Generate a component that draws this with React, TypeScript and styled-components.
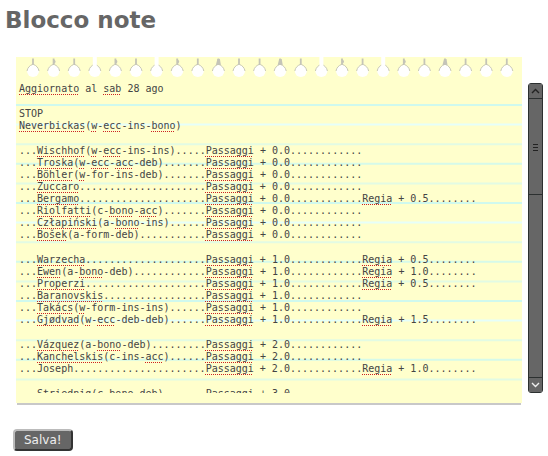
import React, { useRef, useState } from 'react';
import styled, { createGlobalStyle, css } from 'styled-components';

const GlobalStyle = createGlobalStyle`
  * { box-sizing: border-box; }
  body { margin: 0; background: #fff; }
`;

const Page = styled.main`
  padding: 7px 5px 0;
  font-family: 'DejaVu Sans', sans-serif;
`;

const Title = styled.h1`
  margin: 0;
  color: #666;
  font-size: 23px;
  line-height: 27px;
`;

const NoteForm = styled.form`
  margin-top: 23px;
`;

const Pad = styled.div`
  display: flex;
  gap: 6px;
  padding-left: 11px;
`;

const Sheet = styled.div`
  flex: 1;
  min-width: 0;
`;

const Paper = styled.div`
  position: relative;
  padding: 26px 0 10px;
  background: #ffc;
`;

const PaperArt = styled.svg`
  position: absolute;
  inset: 0;
  width: 100%;
  height: 100%;
`;

const PaperEdge = styled.div`
  height: 2px;
  margin: 0 1px;
  background: #c8c8c8;
`;

const Editor = styled.div`
  position: relative;
  height: 310px;
`;

const noteText = css`
  width: 100%;
  height: 100%;
  margin: 0;
  padding: 0 3px;
  border: 0;
  overflow: hidden;
  background: transparent;
  font: 10px/12px 'DejaVu Sans Mono', monospace;
  white-space: pre;
`;

const NoteView = styled.div`
  ${noteText}
  position: relative;
  color: #444;
`;

const NoteRow = styled.div`
  height: 12px;

  &:empty {
    height: 13px;
  }
`;

const Misspelled = styled.span`
  text-decoration: underline dotted #c22 1px;
  text-decoration-skip-ink: none;
  text-underline-offset: 2px;
`;

const NoteArea = styled.textarea`
  ${noteText}
  position: absolute;
  inset: 0;
  display: block;
  color: transparent;
  caret-color: #444;
  resize: none;
  outline: none;
`;

const ScrollBar = styled.div`
  display: flex;
  flex-direction: column;
  flex: none;
  width: 15px;
  margin: 26px 0 12px;
  border: 1px solid #2c3030;
  border-radius: 3px;
  background: #666;
`;

const ScrollButton = styled.button`
  display: flex;
  align-items: center;
  justify-content: center;
  height: 14px;
  padding: 0;
  border: 0;
  background: #666;
`;

const Thumb = styled.div`
  display: flex;
  align-items: center;
  justify-content: center;
  height: 97px;
  border: solid #2c3030;
  border-width: 1px 0;
`;

const Track = styled.div`
  flex: 1;
  border-bottom: 1px solid #2c3030;
`;

const SaveButton = styled.button`
  display: block;
  height: 22px;
  margin: 24px 0 0 8px;
  padding: 0 9px;
  border: 2px solid;
  border-color: #bbb #333 #333 #bbb;
  border-radius: 4px;
  background: #666;
  color: #eee;
  font: 12px/17px 'DejaVu Sans', sans-serif;
`;

const entry = (name: string, steps: string, direction?: string) =>
  `...${name}`.padEnd(31, '.') +
  `Passaggi + ${steps}............` +
  (direction ? `Regia + ${direction}........` : '');

const initialNote = [
  'Aggiornato al sab 28 ago',
  '',
  'STOP',
  'Neverbickas(w-ecc-ins-bono)',
  '',
  entry('Wischhof(w-ecc-ins-ins)', '0.0'),
  entry('Troska(w-ecc-acc-deb)', '0.0'),
  entry('Böhler(w-for-ins-deb)', '0.0'),
  entry('Zuccaro', '0.0'),
  entry('Bergamo', '0.0', '0.5'),
  entry('Riolfatti(c-bono-acc)', '0.0'),
  entry('Człapiński(a-bono-ins)', '0.0'),
  entry('Bošek(a-form-deb)', '0.0'),
  '',
  entry('Warzecha', '1.0', '0.5'),
  entry('Ewen(a-bono-deb)', '1.0', '1.0'),
  entry('Properzi', '1.0', '0.5'),
  entry('Baranovskis', '1.0'),
  entry('Takács(w-form-ins-ins)', '1.0'),
  entry('Gjødvad(w-ecc-deb-deb)', '1.0', '1.5'),
  '',
  entry('Vázquez(a-bono-deb)', '2.0'),
  entry('Kanchelskis(c-ins-acc)', '2.0'),
  entry('Joseph', '2.0', '1.0'),
  '',
  entry('Striednig(c-bono-deb)', '3.0'),
].join('\n');

const knownWords = new Set(['al', 'ago', 'STOP', 'ins', 'for', 'form', 'deb', 'a', 'c', 'Joseph']);

const markSpelling = (line: string) =>
  line
    .split(/(\p{L}+)/u)
    .map((part, i) =>
      i % 2 === 1 && !knownWords.has(part) ? <Misspelled key={i}>{part}</Misspelled> : part,
    )
    .filter((part) => part !== '');

type Stem = 'thin' | 'wide' | 'torn' | 'open';
const stems: Stem[] = [
  'thin', 'torn', 'thin', 'open', 'torn', 'thin', 'open', 'torn', 'thin', 'wide', 'thin', 'thin',
  'wide', 'thin', 'open', 'torn', 'thin', 'open', 'torn', 'thin', 'wide', 'thin', 'thin', 'thin',
];

const Hole = ({ x, stem }: { x: number; stem: Stem }) => (
  <g transform={`translate(${x} 0)`}>
    <circle cy="14" r="6" fill="#fff" />
    <path d="M-6 14C-5.5 10.5-3 8.5-.7 7.5M.7 7.5C3 8.5 5.5 10.5 6 14" fill="none" stroke="#c9c9b4" />
    {stem === 'open' && <path d="M-2 0H2V9H-2Z" fill="#fff" />}
    {stem !== 'open' && <path d="M0 1.5V8" stroke="#c4c4b8" strokeWidth="1.8" />}
    {stem === 'torn' && <path d="M-.5 2Q4 4 .5 7Z" fill="#c4c4b8" />}
    {stem === 'wide' && <path d="M-1 2H1.5L2.5 8H-2.5Z" fill="#c4c4b8" />}
  </g>
);

const ruleColors = ['#cff9ee', '#e6fffa', '#e2fbe4', '#d5faea', '#e2fbe4'];
const rules = Array.from({ length: 15 }, (_, i) => ({
  y: 48 + i * 19.6,
  color: ruleColors[i % 5],
}));

export default function App() {
  const [note, setNote] = useState(initialNote);
  const area = useRef<HTMLTextAreaElement>(null);
  const view = useRef<HTMLDivElement>(null);

  const scroll = (rows: number) => area.current?.scrollBy({ top: rows * 12 });
  const syncView = () => {
    if (area.current && view.current) {
      view.current.scrollTop = area.current.scrollTop;
      view.current.scrollLeft = area.current.scrollLeft;
    }
  };

  return (
    <Page>
      <GlobalStyle />
      <Title id="note-title">Blocco note</Title>
      <NoteForm onSubmit={(e) => e.preventDefault()}>
        <Pad>
          <Sheet>
            <Paper>
              <PaperArt aria-hidden="true">
                {rules.map((rule) => (
                  <line key={rule.y} x1="0" x2="100%" y1={rule.y} y2={rule.y} stroke={rule.color} strokeWidth="2" />
                ))}
                {stems.map((stem, i) => (
                  <Hole key={i} x={17 + i * 20.6} stem={stem} />
                ))}
              </PaperArt>
              <Editor>
                <NoteView ref={view} aria-hidden="true">
                  {note.split('\n').map((line, row) => (
                    <NoteRow key={row}>{markSpelling(line)}</NoteRow>
                  ))}
                </NoteView>
                <NoteArea
                  ref={area}
                  aria-labelledby="note-title"
                  spellCheck={false}
                  wrap="off"
                  value={note}
                  onChange={(e) => setNote(e.target.value)}
                  onScroll={syncView}
                />
              </Editor>
            </Paper>
            <PaperEdge />
          </Sheet>
          <ScrollBar>
            <ScrollButton type="button" aria-label="Scorri su" onClick={() => scroll(-1)}>
              <svg width="9" height="6" aria-hidden="true">
                <path d="M1 5L4.5 1.5L8 5" fill="none" stroke="#222" strokeWidth="1.4" />
              </svg>
            </ScrollButton>
            <Thumb>
              <svg width="5" height="8" aria-hidden="true">
                <path d="M0 1.5H5M0 4.5H5M0 7.5H5" stroke="#222" />
              </svg>
            </Thumb>
            <Track />
            <ScrollButton type="button" aria-label="Scorri giù" onClick={() => scroll(1)}>
              <svg width="9" height="6" aria-hidden="true">
                <path d="M1 1L4.5 4.5L8 1" fill="none" stroke="#eee" strokeWidth="1.4" />
              </svg>
            </ScrollButton>
          </ScrollBar>
        </Pad>
        <SaveButton type="submit">Salva!</SaveButton>
      </NoteForm>
    </Page>
  );
}
